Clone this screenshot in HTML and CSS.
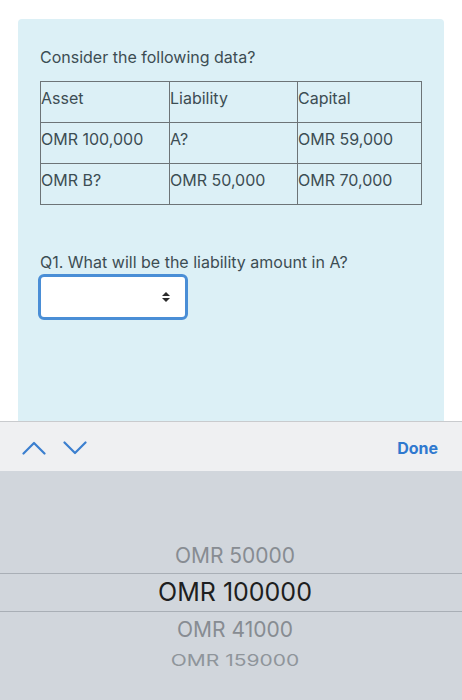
FILE: index.html
```html
<!DOCTYPE html>
<html>
<head>
<meta charset="utf-8">
<link rel="stylesheet" href="styles.css">
</head>
<body>
<div class="page">
  <div class="card">
    <p class="title">Consider the following data?</p>
    <table class="data">
      <colgroup><col class="c1"><col class="c2"><col class="c3"></colgroup>
      <tr><td>Asset</td><td>Liability</td><td>Capital</td></tr>
      <tr><td>OMR 100,000</td><td>A?</td><td>OMR 59,000</td></tr>
      <tr><td>OMR B?</td><td>OMR 50,000</td><td>OMR 70,000</td></tr>
    </table>
    <p class="question">Q1. What will be the liability amount in A?</p>
    <div class="select">
      <svg class="updown" width="10" height="12" viewBox="0 0 10 12"><path d="M5 1 L9 5 H1 Z M5 11 L9 7 H1 Z" fill="#2b2b2b"/></svg>
    </div>
  </div>
  <div class="toolbar">
    <div class="navs">
      <svg width="24" height="14" viewBox="0 0 24 14"><path d="M1.5 12.5 L12 2 L22.5 12.5" fill="none" stroke="#3b7fcf" stroke-width="2.2" stroke-linecap="round" stroke-linejoin="round"/></svg>
      <svg width="24" height="14" viewBox="0 0 24 14"><path d="M1.5 1.5 L12 12 L22.5 1.5" fill="none" stroke="#3b7fcf" stroke-width="2.2" stroke-linecap="round" stroke-linejoin="round"/></svg>
    </div>
    <span class="done">Done</span>
  </div>
  <div class="picker">
    <div class="item near">OMR 50000</div>
    <div class="item selected">OMR 100000</div>
    <div class="item near">OMR 41000</div>
    <div class="item far">OMR 159000</div>
  </div>
</div>
</body>
</html>
```
FILE: styles.css
```css
html, body {
  margin: 0;
  padding: 0;
  background: #ffffff;
}
body {
  font-family: Inter, "Liberation Sans", sans-serif;
  width: 462px;
  height: 700px;
  overflow: hidden;
}
.page {
  padding-top: 19px;
}
.card {
  margin-left: 18px;
  width: 426px;
  height: 402px;
  box-sizing: border-box;
  background: #dcf0f6;
  border-radius: 4px 4px 0 0;
  padding: 27px 22px 0 22px;
  color: #3c4d53;
}
.title {
  margin: 0;
  font-size: 16px;
  line-height: 22px;
}
.data {
  margin-top: 13px;
  width: 381px;
  border-collapse: collapse;
  table-layout: fixed;
  font-size: 16px;
  color: #3c4d53;
}
.c1 { width: 129px; }
.c2 { width: 128px; }
.c3 { width: 124px; }
.data td {
  border: 1.5px solid #6d7477;
  height: 41px;
  box-sizing: border-box;
  padding: 5px 0 0 0;
  vertical-align: top;
  line-height: 22px;
  white-space: nowrap;
}
.question {
  margin: 46px 0 0 0;
  font-size: 16px;
  line-height: 22px;
}
.select {
  margin: 1px 0 0 -2px;
  width: 150px;
  height: 46px;
  box-sizing: border-box;
  border: 3.5px solid #4a8ed6;
  border-radius: 6px;
  background: #ffffff;
  display: flex;
  align-items: center;
  justify-content: flex-end;
  padding-right: 14px;
}
.toolbar {
  height: 50px;
  box-sizing: border-box;
  background: #eff0f2;
  border-top: 1px solid #c9cbce;
  display: flex;
  align-items: center;
  justify-content: space-between;
  padding: 2px 24px 0 22px;
}
.navs {
  display: flex;
  gap: 17px;
  align-items: center;
}
.done {
  color: #2f79cf;
  font-weight: 700;
  font-size: 16px;
}
.picker {
  height: 229px;
  background: #d1d6dc;
  display: flex;
  flex-direction: column;
  align-items: center;
  padding-top: 67px;
  box-sizing: border-box;
}
.item {
  width: 100%;
  text-align: center;
  padding-left: 8px;
  box-sizing: border-box;
  font-weight: 400;
}
.near {
  height: 35px;
  line-height: 35px;
  font-size: 21px;
  color: #878c92;
}
.selected {
  height: 39px;
  line-height: 37px;
  font-size: 25px;
  color: #1d1e20;
  border-top: 1px solid #a9afb6;
  border-bottom: 1px solid #a9afb6;
}
.far {
  height: 27px;
  line-height: 27px;
  font-size: 21px;
  color: #8f959b;
  transform: scaleY(0.75);
}
```
